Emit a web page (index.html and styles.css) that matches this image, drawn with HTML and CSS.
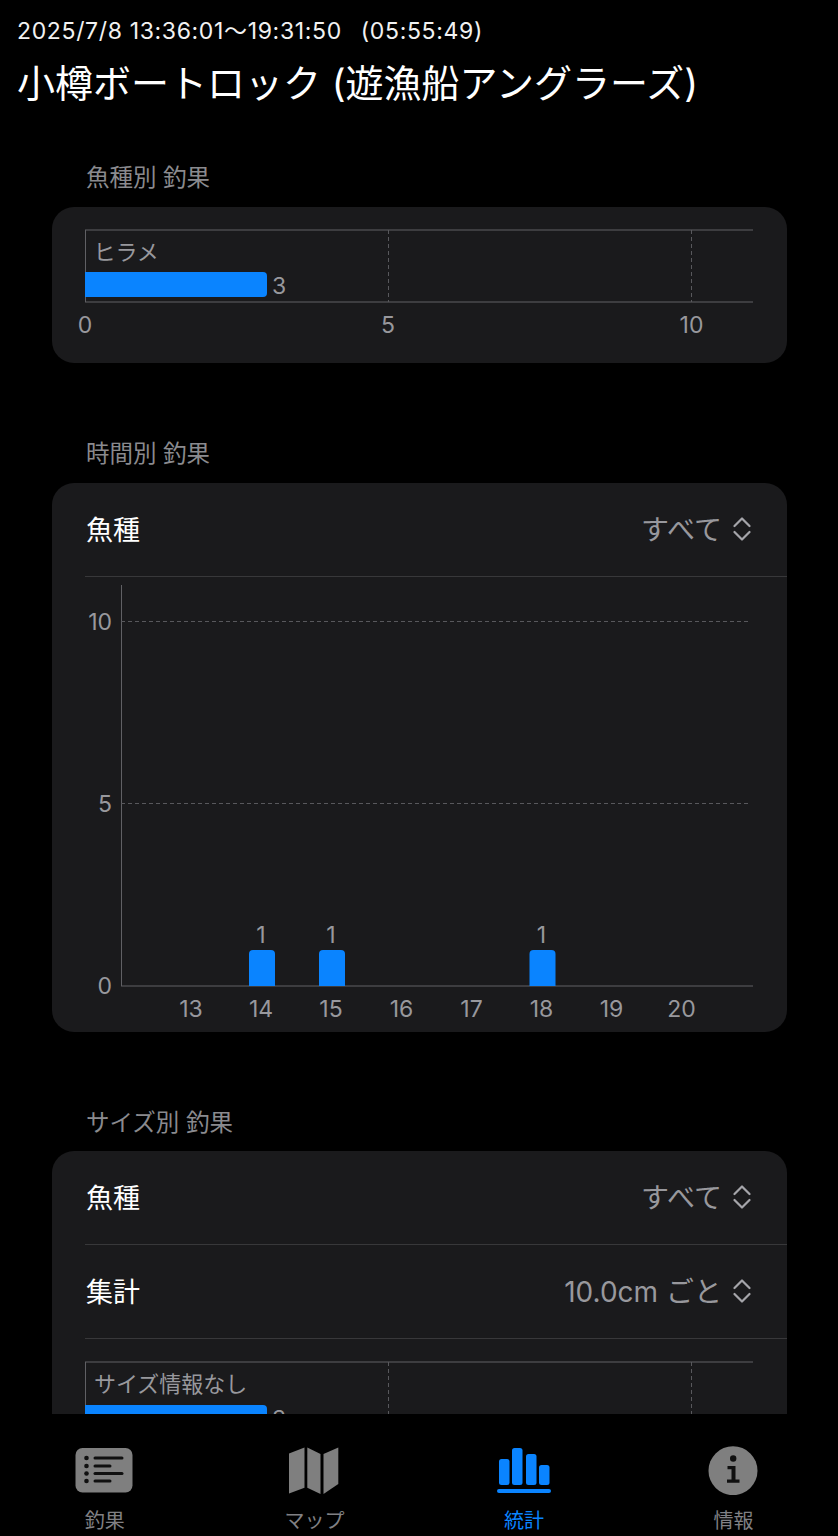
FILE: index.html
```html
<!DOCTYPE html>
<html lang="ja">
<head>
<meta charset="utf-8">
<title>統計</title>
<link rel="stylesheet" href="styles.css">
</head>
<body>
<div class="app">
  <main class="content">
    <header class="head">
      <p class="when">2025/7/8 13:36:01〜19:31:50<span class="duration">(05:55:49)</span></p>
      <h1 class="title">小樽ボートロック (遊漁船アングラーズ)</h1>
    </header>

    <section class="section">
      <h2 class="label">魚種別 釣果</h2>
      <div class="card">
        <svg class="chart chart-species" viewBox="52 206 735 156">
          <line class="axis" x1="85" y1="229" x2="753" y2="229"/>
          <line class="axis" x1="85" y1="301" x2="753" y2="301"/>
          <line class="axis" x1="85.5" y1="229" x2="85.5" y2="301"/>
          <line class="grid" x1="388.5" y1="229" x2="388.5" y2="301"/>
          <line class="grid" x1="691.5" y1="229" x2="691.5" y2="301"/>
          <text class="tick cat" x="93.500" y="259">ヒラメ</text>
          <path class="bar" d="M85 271H263a4 4 0 0 1 4 4V292a4 4 0 0 1 -4 4H85Z"/>
          <text class="tick" x="272" y="293">3</text>
          <text class="tick mid" x="85" y="332">0</text>
          <text class="tick mid" x="388" y="332">5</text>
          <text class="tick mid" x="691.500" y="332">10</text>
        </svg>
      </div>
    </section>

    <section class="section">
      <h2 class="label">時間別 釣果</h2>
      <div class="card">
        <div class="row">
          <span class="row-name">魚種</span>
          <span class="row-value">すべて
            <svg class="updown" viewBox="0 0 18 24"><path d="M1.5 9L9 1.5L16.500 9M1.5 15L9 22.500L16.500 15"/></svg>
          </span>
        </div>
        <svg class="chart chart-hours" viewBox="52 575 735 455">
          <line class="axis" x1="121.500" y1="583" x2="121.500" y2="984"/>
          <line class="axis" x1="121" y1="984" x2="753" y2="984"/>
          <line class="grid" x1="121" y1="619.500" x2="748" y2="619.500"/>
          <line class="grid" x1="121" y1="801.500" x2="748" y2="801.500"/>
          <text class="tick end" x="112" y="628">10</text>
          <text class="tick end" x="112" y="810">5</text>
          <text class="tick end" x="112" y="992">0</text>
          <path class="bar" d="M249 984V952a4 4 0 0 1 4 -4H271a4 4 0 0 1 4 4V984Z"/>
          <path class="bar" d="M319 984V952a4 4 0 0 1 4 -4H341a4 4 0 0 1 4 4V984Z"/>
          <path class="bar" d="M529.500 984V952a4 4 0 0 1 4 -4H551.500a4 4 0 0 1 4 4V984Z"/>
          <text class="tick mid" x="261" y="941">1</text>
          <text class="tick mid" x="331" y="941">1</text>
          <text class="tick mid" x="541.500" y="941">1</text>
          <text class="tick mid" x="191" y="1015">13</text>
          <text class="tick mid" x="261" y="1015">14</text>
          <text class="tick mid" x="331" y="1015">15</text>
          <text class="tick mid" x="401.500" y="1015">16</text>
          <text class="tick mid" x="471.500" y="1015">17</text>
          <text class="tick mid" x="541.500" y="1015">18</text>
          <text class="tick mid" x="611.500" y="1015">19</text>
          <text class="tick mid" x="681.500" y="1015">20</text>
        </svg>
      </div>
    </section>

    <section class="section">
      <h2 class="label label-tight">サイズ別 釣果</h2>
      <div class="card">
        <div class="row">
          <span class="row-name">魚種</span>
          <span class="row-value">すべて
            <svg class="updown" viewBox="0 0 18 24"><path d="M1.5 9L9 1.5L16.500 9M1.5 15L9 22.500L16.500 15"/></svg>
          </span>
        </div>
        <div class="row">
          <span class="row-name">集計</span>
          <span class="row-value">10.0cm ごと
            <svg class="updown" viewBox="0 0 18 24"><path d="M1.5 9L9 1.5L16.500 9M1.5 15L9 22.500L16.500 15"/></svg>
          </span>
        </div>
        <svg class="chart chart-sizes" viewBox="52 1336 735 156">
          <line class="axis" x1="85" y1="1359" x2="753" y2="1359"/>
          <line class="axis" x1="85" y1="1431" x2="753" y2="1431"/>
          <line class="axis" x1="85.500" y1="1359" x2="85.500" y2="1431"/>
          <line class="grid" x1="388.500" y1="1359" x2="388.500" y2="1431"/>
          <line class="grid" x1="691.500" y1="1359" x2="691.500" y2="1431"/>
          <text class="tick cat" x="94" y="1389">サイズ情報なし</text>
          <path class="bar" d="M85 1402H263a4 4 0 0 1 4 4V1423a4 4 0 0 1 -4 4H85Z"/>
          <text class="tick" x="272" y="1424">3</text>
        </svg>
      </div>
    </section>
  </main>

  <nav class="tabs">
    <a class="tab">
      <svg class="tab-icon" viewBox="0 0 60 50">
        <rect class="tab-fill" x="0.500" y="3" width="57" height="44.500" rx="7"/>
        <g class="tab-cut">
          <circle cx="11.500" cy="13" r="2.300"/><circle cx="11.500" cy="21" r="2.300"/><circle cx="11.500" cy="28.500" r="2.300"/><circle cx="11.500" cy="36" r="2.300"/>
          <rect x="18.500" y="11.500" width="30" height="3" rx="1.500"/>
          <rect x="18.500" y="19.500" width="18" height="3" rx="1.500"/>
          <rect x="18.500" y="27" width="30" height="3" rx="1.500"/>
          <rect x="18.500" y="34.500" width="18" height="3" rx="1.500"/>
        </g>
      </svg>
      <span>釣果</span>
    </a>
    <a class="tab">
      <svg class="tab-icon" viewBox="0 0 60 50">
        <g class="tab-fill">
          <path d="M5 8.500L20.500 2.500V42.800L5 48.500Z"/>
          <path d="M23.300 2.500L36.500 9V49L23.300 42.800Z"/>
          <path d="M39.500 9L54.300 2.500V39L39.500 49Z"/>
        </g>
      </svg>
      <span>マップ</span>
    </a>
    <a class="tab tab-on">
      <svg class="tab-icon" viewBox="0 0 60 50">
        <rect x="5" y="14" width="10.500" height="26" rx="2.500"/>
        <rect x="18" y="3" width="10.500" height="37" rx="2.500"/>
        <rect x="32" y="9" width="10.500" height="31" rx="2.500"/>
        <rect x="45" y="20" width="10.500" height="20" rx="2.500"/>
        <rect x="3" y="44" width="54" height="4" rx="2"/>
      </svg>
      <span>統計</span>
    </a>
    <a class="tab">
      <svg class="tab-icon" viewBox="0 0 60 50">
        <circle class="tab-fill" cx="29" cy="25.700" r="24.500"/>
        <g class="tab-cut">
          <circle cx="29.200" cy="13.500" r="3.200"/>
          <path d="M23.500 21H31.500V34.500H35.500V37.800H23V34.500H27.500V24.200H23.500Z"/>
        </g>
      </svg>
      <span>情報</span>
    </a>
  </nav>
</div>
</body>
</html>
```

FILE: styles.css
```css
* { box-sizing: border-box; }

html, body {
  margin: 0;
  padding: 0;
  background: #000;
}

body {
  font-family: Inter, "Noto Sans CJK JP", sans-serif;
  color: #fff;
}

.app {
  display: flex;
  flex-direction: column;
  width: 838px;
  height: 1536px;
  overflow: hidden;
}

.content {
  height: 1414px;
  overflow: hidden;
  flex: none;
}

.head {
  padding: 16px 17px 0;
  height: 162px;
}

.when {
  margin: 0;
  font-size: 23px;
  line-height: 30px;
  letter-spacing: 0.650px;
  color: #f2f2f2;
}

.duration {
  margin-left: 19px;
}

.title {
  margin: 14px 0 0;
  font-size: 38px;
  line-height: 46px;
  font-weight: 400;
  white-space: nowrap;
}

.section {
  padding: 0 51px 0 52px;
  margin-bottom: 75px;
}

.label {
  margin: 0 0 13px;
  padding-left: 34px;
  font-size: 23.500px;
  line-height: 32px;
  font-weight: 400;
  color: #8a8a8e;
}

.label-tight {
  margin-bottom: 12px;
}

.card {
  background: #1a1a1c;
  border-radius: 22px;
  overflow: hidden;
}

.row {
  display: flex;
  justify-content: space-between;
  align-items: center;
  height: 94px;
  margin-left: 33px;
  padding: 0 36px 3px 1px;
  border-bottom: 1px solid #38383a;
}

.row-name {
  font-size: 27px;
}

.row-value {
  display: flex;
  align-items: center;
  gap: 11px;
  font-size: 28px;
  color: #98989d;
}

.updown {
  width: 18px;
  height: 24px;
  margin-top: 2px;
  fill: none;
  stroke: #a5a5aa;
  stroke-width: 2.200;
  stroke-linecap: round;
  stroke-linejoin: round;
}

.chart {
  display: block;
  width: 735px;
}

.chart-species,
.chart-sizes { height: 156px; }

.chart-hours { height: 455px; }

.axis {
  stroke: #606064;
  stroke-width: 1;
}

.grid {
  stroke: #58585c;
  stroke-width: 1;
  stroke-dasharray: 4 3;
}

.bar { fill: #0a84ff; }

.tick {
  font-size: 23px;
  fill: #98989d;
}

.cat { font-size: 22px; }

.mid { text-anchor: middle; }
.end { text-anchor: end; }

.tabs {
  display: grid;
  grid-template-columns: repeat(4, 209.600px);
  height: 122px;
  background: #000;
}

.tab {
  display: flex;
  flex-direction: column;
  align-items: center;
  padding-top: 31px;
  font-size: 20px;
  line-height: 26px;
  color: #808084;
}

.tab-icon {
  width: 60px;
  height: 50px;
  margin-bottom: 13px;
}

.tab-fill {
  fill: #7f7f7f;
}

.tab-cut {
  fill: #101010;
}

.tab-on {
  color: #0a84ff;
}

.tab-on .tab-icon {
  fill: #0a84ff;
}
```
